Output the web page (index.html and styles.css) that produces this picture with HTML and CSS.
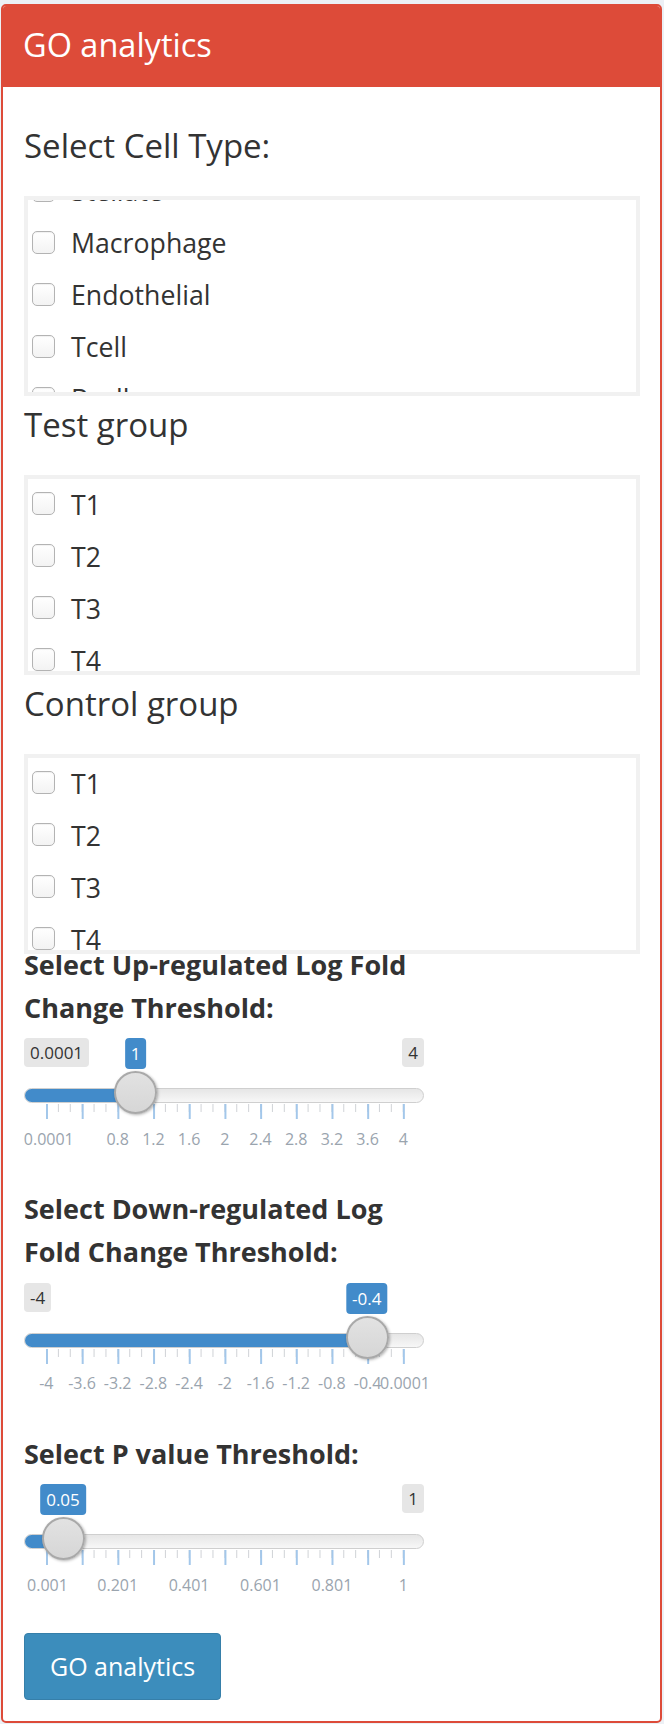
FILE: index.html
```html
<!DOCTYPE html>
<html lang="en">
<head>
<meta charset="utf-8">
<title>GO analytics</title>
<link rel="stylesheet" href="styles.css">
</head>
<body>
<div class="page">
  <div class="box">
    <div class="box-header"><h3 class="box-title">GO analytics</h3></div>
    <div class="box-body">

      <div class="field">
        <div class="field-label first">Select Cell Type:</div>
        <div class="checklist">
          <div class="checklist-inner scrolled">
            <label class="check-row"><input type="checkbox" class="cb"><span class="check-text">Stellate</span></label>
            <label class="check-row"><input type="checkbox" class="cb"><span class="check-text">Macrophage</span></label>
            <label class="check-row"><input type="checkbox" class="cb"><span class="check-text">Endothelial</span></label>
            <label class="check-row"><input type="checkbox" class="cb"><span class="check-text">Tcell</span></label>
            <label class="check-row"><input type="checkbox" class="cb"><span class="check-text">Bcell</span></label>
          </div>
        </div>
      </div>

      <div class="field">
        <div class="field-label">Test group</div>
        <div class="checklist">
          <div class="checklist-inner">
            <label class="check-row"><input type="checkbox" class="cb"><span class="check-text">T1</span></label>
            <label class="check-row"><input type="checkbox" class="cb"><span class="check-text">T2</span></label>
            <label class="check-row"><input type="checkbox" class="cb"><span class="check-text">T3</span></label>
            <label class="check-row"><input type="checkbox" class="cb"><span class="check-text">T4</span></label>
          </div>
        </div>
      </div>

      <div class="field">
        <div class="field-label">Control group</div>
        <div class="checklist">
          <div class="checklist-inner">
            <label class="check-row"><input type="checkbox" class="cb"><span class="check-text">T1</span></label>
            <label class="check-row"><input type="checkbox" class="cb"><span class="check-text">T2</span></label>
            <label class="check-row"><input type="checkbox" class="cb"><span class="check-text">T3</span></label>
            <label class="check-row"><input type="checkbox" class="cb"><span class="check-text">T4</span></label>
          </div>
        </div>
      </div>

      <div class="slider-field first-slider">
        <div class="slider-label">Select Up-regulated Log Fold Change Threshold:</div>
        <div class="irs">
          <div class="irs-top">
            <span class="irs-minmax">0.0001</span>
            <span class="irs-minmax">4</span>
          </div>
          <div class="irs-line"><div class="irs-bar" style="width:111.5px"></div></div>
          <div class="irs-grid"></div>
          <div class="irs-grid-labels">
            <span class="irs-grid-text" style="left:24.8px">0.0001</span>
            <span class="irs-grid-text" style="left:93.7px">0.8</span>
            <span class="irs-grid-text" style="left:129.4px">1.2</span>
            <span class="irs-grid-text" style="left:165.1px">1.6</span>
            <span class="irs-grid-text" style="left:200.8px">2</span>
            <span class="irs-grid-text" style="left:236.5px">2.4</span>
            <span class="irs-grid-text" style="left:272.2px">2.8</span>
            <span class="irs-grid-text" style="left:307.9px">3.2</span>
            <span class="irs-grid-text" style="left:343.6px">3.6</span>
            <span class="irs-grid-text" style="left:379.3px">4</span>
          </div>
          <span class="irs-single" style="left:111.5px">1</span>
          <span class="irs-handle" style="left:111.5px"></span>
        </div>
      </div>

      <div class="slider-field">
        <div class="slider-label">Select Down-regulated Log Fold Change Threshold:</div>
        <div class="irs">
          <div class="irs-top">
            <span class="irs-minmax">-4</span>
            <span class="irs-minmax hidden">0.0001</span>
          </div>
          <div class="irs-line"><div class="irs-bar" style="width:343.6px"></div></div>
          <div class="irs-grid"></div>
          <div class="irs-grid-labels">
            <span class="irs-grid-text" style="left:22.3px">-4</span>
            <span class="irs-grid-text" style="left:58px">-3.6</span>
            <span class="irs-grid-text" style="left:93.7px">-3.2</span>
            <span class="irs-grid-text" style="left:129.4px">-2.8</span>
            <span class="irs-grid-text" style="left:165.1px">-2.4</span>
            <span class="irs-grid-text" style="left:200.8px">-2</span>
            <span class="irs-grid-text" style="left:236.5px">-1.6</span>
            <span class="irs-grid-text" style="left:272.2px">-1.2</span>
            <span class="irs-grid-text" style="left:307.9px">-0.8</span>
            <span class="irs-grid-text" style="left:343.6px">-0.4</span>
            <span class="irs-grid-text" style="left:381px">0.0001</span>
          </div>
          <span class="irs-single" style="left:342.7px">-0.4</span>
          <span class="irs-handle" style="left:343.6px"></span>
        </div>
      </div>

      <div class="slider-field">
        <div class="slider-label">Select P value Threshold:</div>
        <div class="irs">
          <div class="irs-top">
            <span class="irs-minmax hidden">0.001</span>
            <span class="irs-minmax">1</span>
          </div>
          <div class="irs-line"><div class="irs-bar" style="width:39.8px"></div></div>
          <div class="irs-grid"></div>
          <div class="irs-grid-labels">
            <span class="irs-grid-text" style="left:23.5px">0.001</span>
            <span class="irs-grid-text" style="left:93.7px">0.201</span>
            <span class="irs-grid-text" style="left:165.1px">0.401</span>
            <span class="irs-grid-text" style="left:236.5px">0.601</span>
            <span class="irs-grid-text" style="left:307.9px">0.801</span>
            <span class="irs-grid-text" style="left:379.3px">1</span>
          </div>
          <span class="irs-single" style="left:39px">0.05</span>
          <span class="irs-handle" style="left:39.8px"></span>
        </div>
      </div>

      <button class="btn-go" type="button">GO analytics</button>
    </div>
  </div>
</div>
</body>
</html>
```
FILE: styles.css
```css
* { box-sizing: border-box; }

body {
  margin: 0;
  background: #ecf0f5;
  font-family: "Open Sans", "Noto Sans", sans-serif;
  color: #333;
}

.page {
  padding: 4px 2px 3px 1px;
}

.box {
  background: #fff;
  border: 2px solid #dd4b39;
  border-radius: 5px;
  overflow: hidden;
}

.box-header {
  background: #dd4b39;
  height: 81px;
  padding: 17px 20px 0 20px;
}

.box-title {
  margin: 0;
  font-size: 32.5px;
  line-height: 44px;
  font-weight: 400;
  color: #fff;
}

.box-body {
  padding: 0 20px 21px 21px;
}

.field-label {
  font-size: 33px;
  line-height: 57px;
  margin-bottom: 22px;
  color: #333;
}

.field-label.first {
  margin-top: 30px;
}

.checklist {
  height: 200px;
  border: 4px solid #f1f1f1;
  overflow: hidden;
  background: #fff;
}

.checklist-inner {
  margin-top: -1.5px;
}

.checklist-inner.scrolled {
  margin-top: -36px;
}

.check-row {
  display: flex;
  align-items: center;
  height: 52px;
}

.cb {
  appearance: none;
  -webkit-appearance: none;
  margin: 0 0 0 4px;
  width: 23px;
  height: 23px;
  flex: none;
  border: 1px solid #b3b3b3;
  border-radius: 5px;
  background: linear-gradient(#ffffff, #f3f3f3);
  box-shadow: inset 0 1px 1px rgba(0, 0, 0, 0.06);
}

.check-text {
  margin-left: 16px;
  padding-top: 2px;
  font-size: 26.7px;
  line-height: 36px;
  color: #333;
}

.slider-field {
  width: 400px;
  margin-bottom: 38px;
}

.slider-field.first-slider {
  margin-top: -11.5px;
}

.slider-label {
  font-size: 27px;
  line-height: 43px;
  font-weight: 700;
  color: #333;
}

.irs {
  position: relative;
  margin-top: 9.5px;
  height: 111px;
}

.irs-top {
  display: flex;
  justify-content: space-between;
  align-items: flex-start;
  height: 50px;
}

.irs-minmax {
  display: block;
  height: 29px;
  padding: 0 6px;
  border-radius: 4px;
  background: #e6e6e6;
  color: #333;
  font-size: 17px;
  line-height: 29px;
}

.irs-minmax.hidden {
  visibility: hidden;
}

.irs-line {
  height: 15px;
  border: 1px solid #cfcfcf;
  border-radius: 8px;
  background: linear-gradient(#e6e6e6, #f7f7f7);
  overflow: hidden;
}

.irs-bar {
  background: #428bca;
  margin: -1px 0 0 -1px;
  height: 15px;
}

.irs-grid {
  margin-top: 1px;
  margin-left: 21.5px;
  width: 359px;
  height: 15px;
  background-image:
    linear-gradient(to right, #a3c7ea 0, #a3c7ea 1.5px, transparent 1.5px),
    linear-gradient(to right, #cfd2d6 0, #cfd2d6 1px, transparent 1px);
  background-size: 35.7px 15px, 11.9px 8px;
  background-repeat: repeat-x;
}

.irs-grid-labels {
  position: relative;
  margin-top: 9.8px;
  height: 20px;
}

.irs-grid-text {
  position: absolute;
  top: 0;
  transform: translateX(-50%);
  font-size: 16px;
  line-height: 20px;
  color: #9aa4ae;
  white-space: nowrap;
}

.irs-single {
  position: absolute;
  top: 0;
  transform: translateX(-50%);
  height: 31px;
  padding: 0 6px;
  border-radius: 4px;
  background: #428bca;
  color: #fff;
  font-size: 17px;
  line-height: 31px;
  white-space: nowrap;
}

.irs-handle {
  position: absolute;
  top: 33px;
  width: 43px;
  height: 43px;
  margin-left: -21.5px;
  border-radius: 50%;
  border: 2px solid #a9a9a9;
  background: linear-gradient(#e2e2e2, #d6d6d6);
  box-shadow: 1px 1px 3px rgba(0, 0, 0, 0.3);
}

.btn-go {
  display: block;
  height: 67px;
  padding: 0 25px;
  border: 1px solid #367fa9;
  border-radius: 4px;
  background: #3c8dbc;
  color: #fff;
  font-family: "Open Sans", "Noto Sans", sans-serif;
  font-size: 25px;
  line-height: 65px;
}
```
